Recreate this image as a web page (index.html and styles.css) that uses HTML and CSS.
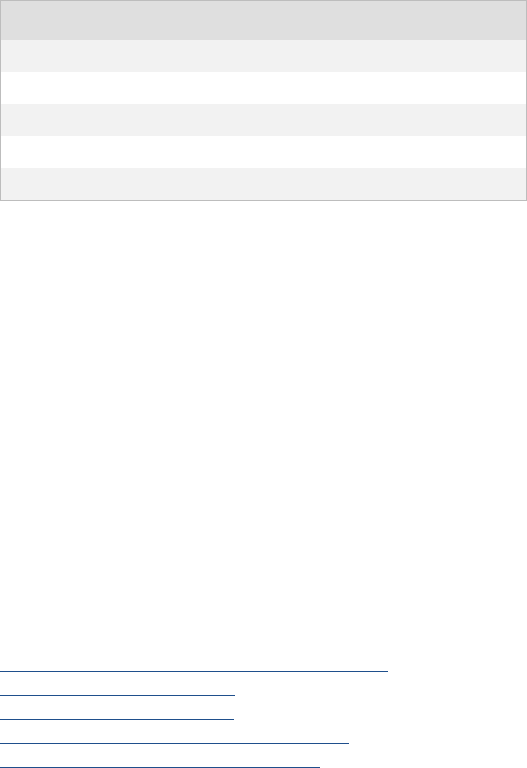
FILE: index.html
```html
<!DOCTYPE html>
<html>
<head>
  <title>Report</title>
  <link rel="stylesheet" href="styles.css">
</head>
<body>
  <table class="data-table">
    <thead>
      <tr><th>&nbsp;</th><th>&nbsp;</th><th>&nbsp;</th></tr>
    </thead>
    <tbody>
      <tr><td>&nbsp;</td><td>&nbsp;</td><td>&nbsp;</td></tr>
      <tr><td>&nbsp;</td><td>&nbsp;</td><td>&nbsp;</td></tr>
      <tr><td>&nbsp;</td><td>&nbsp;</td><td>&nbsp;</td></tr>
      <tr><td>&nbsp;</td><td>&nbsp;</td><td>&nbsp;</td></tr>
      <tr><td>&nbsp;</td><td>&nbsp;</td><td>&nbsp;</td></tr>
    </tbody>
  </table>

  <div class="link-list">
    <a href="#" class="link" style="width: 388px"></a>
    <a href="#" class="link" style="width: 235px"></a>
    <a href="#" class="link" style="width: 234px"></a>
    <a href="#" class="link" style="width: 349px"></a>
    <a href="#" class="link" style="width: 320px"></a>
  </div>
</body>
</html>
```

FILE: styles.css
```css
body {
  font-family: "Liberation Sans", Arial, sans-serif;
  background-color: #fff;
  margin: 0;
  padding: 0;
}

.data-table {
  width: 527px;
  border-collapse: collapse;
  border: 1px solid #bdbdbd;
}

.data-table th,
.data-table td {
  padding: 0;
  font-size: 14px;
}

.data-table th {
  height: 39px;
  background-color: #dfdfdf;
}

.data-table td {
  height: 32px;
}

.data-table tbody tr:nth-child(odd) {
  background-color: #f2f2f2;
}

.data-table tbody tr:nth-child(even) {
  background-color: #fff;
}

.link-list {
  margin-top: 447px;
}

.link {
  display: block;
  height: 23px;
  border-bottom: 1px solid #1f4f8c;
}
```
